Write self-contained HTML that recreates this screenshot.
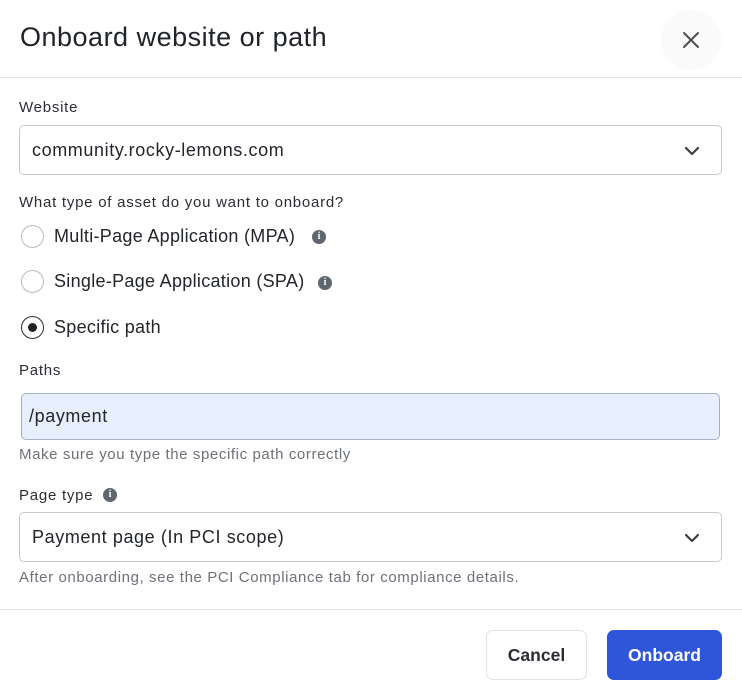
<!DOCTYPE html>
<html><head><meta charset="utf-8"><style>
*{box-sizing:border-box;margin:0;padding:0}
body{width:742px;height:700px;background:#fff;font-family:"Liberation Sans",Arial,sans-serif;color:#1f2328;position:relative;overflow:hidden}
.a{position:absolute;white-space:nowrap}
.lbl{font-size:15px;letter-spacing:0.75px;color:#2a2e33}
.box{position:absolute;border:1px solid #c6c9ce;border-radius:5px;background:#fff}
.val{font-size:18px;letter-spacing:0.6px;color:#22262a}
.rl{letter-spacing:0.3px}
.help{font-size:15px;letter-spacing:0.6px;color:#6d7178}
.radio{position:absolute;width:23px;height:23px;border:1px solid #b8bcc2;border-radius:50%;background:#fff}
.info{position:absolute;width:14px;height:14px;border-radius:50%;background:#5f6670;color:#fff;font-size:10px;font-weight:bold;text-align:center;line-height:14px;font-family:"Liberation Serif",serif}
.hr{position:absolute;left:0;width:742px;height:1px;background:#e1e4e8}
</style></head><body>
<div class="a" style="left:20px;top:22px;font-size:27px;letter-spacing:0.5px;color:#202428">Onboard website or path</div>
<div class="a" style="left:661px;top:10px;width:60px;height:60px;border-radius:50%;background:#fafafa"></div>
<svg class="a" style="left:682px;top:31px" width="18" height="18" viewBox="0 0 18 18"><path d="M2 2L16 16M16 2L2 16" stroke="#4a4f55" stroke-width="2" stroke-linecap="round"/></svg>
<div class="hr" style="top:77px"></div>

<div class="a lbl" style="left:19px;top:99px">Website</div>
<div class="box" style="left:19px;top:125px;width:703px;height:50px"></div>
<div class="a val" style="left:32px;top:140px">community.rocky-lemons.com</div>
<svg class="a" style="left:684px;top:145px" width="16" height="12" viewBox="0 0 16 12"><path d="M2 3L8 9L14 3" stroke="#3a3f45" stroke-width="2.2" fill="none" stroke-linecap="round" stroke-linejoin="round"/></svg>

<div class="a lbl" style="left:19px;top:194px">What type of asset do you want to onboard?</div>
<div class="radio" style="left:21px;top:225px"></div>
<div class="a val rl" style="left:54px;top:226px">Multi-Page Application (MPA)</div>
<div class="info" style="left:312px;top:230px">i</div>
<div class="radio" style="left:21px;top:270px"></div>
<div class="a val rl" style="left:54px;top:271px">Single-Page Application (SPA)</div>
<div class="info" style="left:318px;top:276px">i</div>
<div class="radio" style="left:21px;top:316px;border-color:#2a2e33"></div>
<div class="a" style="left:28px;top:323px;width:9px;height:9px;border-radius:50%;background:#1f2328"></div>
<div class="a val rl" style="left:54px;top:317px">Specific path</div>

<div class="a lbl" style="left:19px;top:362px">Paths</div>
<div class="box" style="left:21px;top:393px;width:699px;height:47px;background:#e8effc;border-color:#a7b0bf"></div>
<div class="a val" style="left:29px;top:406px">/payment</div>
<div class="a help" style="left:19px;top:446px">Make sure you type the specific path correctly</div>

<div class="a lbl" style="left:19px;top:487px">Page type</div>
<div class="info" style="left:103px;top:488px">i</div>
<div class="box" style="left:19px;top:512px;width:703px;height:50px"></div>
<div class="a val" style="left:32px;top:527px">Payment page (In PCI scope)</div>
<svg class="a" style="left:684px;top:532px" width="16" height="12" viewBox="0 0 16 12"><path d="M2 3L8 9L14 3" stroke="#3a3f45" stroke-width="2.2" fill="none" stroke-linecap="round" stroke-linejoin="round"/></svg>
<div class="a help" style="left:19px;top:569px">After onboarding, see the PCI Compliance tab for compliance details.</div>

<div class="hr" style="top:609px"></div>
<div class="a" style="left:486px;top:630px;width:101px;height:50px;border:1px solid #dfe2e6;border-radius:7px;background:#fff;text-align:center;line-height:48px;font-size:17.5px;font-weight:bold;color:#2a2e33">Cancel</div>
<div class="a" style="left:607px;top:630px;width:115px;height:50px;border-radius:7px;background:#2f55d9;text-align:center;line-height:50px;font-size:17.5px;font-weight:bold;color:#fff">Onboard</div>
</body></html>
